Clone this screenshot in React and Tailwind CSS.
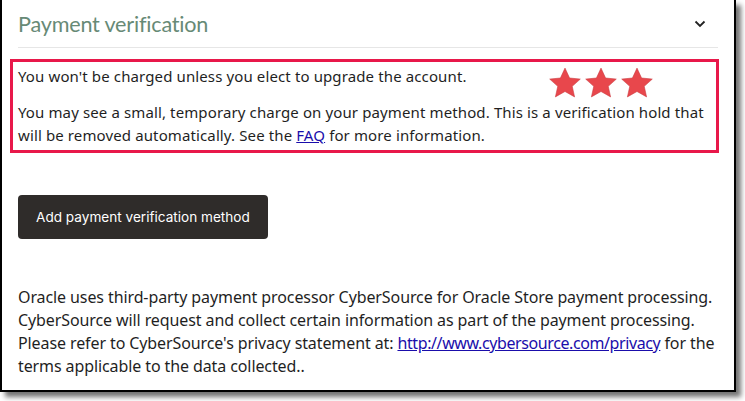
import React from 'react';

const Star = () => (
    <svg width="34" height="32" viewBox="0 0 24 23" className="block">
        <path
            d="M12 0.8l3.3 7.1 7.7 0.8-5.8 5.2 1.7 7.6L12 17.6l-6.9 3.9 1.7-7.6L1 8.7l7.7-0.8z"
            fill="#e8474c"
            stroke="#c93a40"
            strokeWidth="0.4"
            strokeLinejoin="round"
        />
    </svg>
);

const App = () => {
    return (
        <div className="w-[745px] h-[401px] bg-white overflow-hidden" style={{ fontFamily: '"Noto Sans", "Open Sans", sans-serif' }}>
            <div className="w-[736px] h-[392px] bg-white border-l-2 border-r-2 border-b-2 border-black shadow-[5px_5px_5px_rgba(0,0,0,0.55)] pl-4 pr-4">
                {/* header */}
                <div className="flex items-center justify-between h-[48px] border-b border-[#e6e6e6]">
                    <h2 className="text-[21.6px] text-[#678a76] tracking-[-0.2px] pt-0.5" style={{ fontFamily: 'Lato, sans-serif' }}>
                        Payment verification
                    </h2>
                    <svg width="12" height="8" viewBox="0 0 12 8" className="mr-3">
                        <path d="M1.5 1.5L6 6l4.5-4.5" fill="none" stroke="#222" strokeWidth="1.8" />
                    </svg>
                </div>

                {/* highlighted notice */}
                <div className="relative -ml-[8px] mt-[11px] w-[709px] h-[94px] border-[3px] border-[#e8184a] pl-[5px] pt-[3px] text-[15px] text-[#1f1f1f] leading-[23px] tracking-[0.12px]">
                    <p>You won't be charged unless you elect to upgrade the account.</p>
                    <p className="mt-[13px]">
                        You may see a small, temporary charge on your payment method. This is a verification hold that will be removed automatically. See the{' '}
                        <a href="#" className="text-[#1a0dab] underline">FAQ</a> for more information.
                    </p>
                    <div className="absolute left-[535px] top-[5px] flex gap-[2px]">
                        <Star />
                        <Star />
                        <Star />
                    </div>
                </div>

                {/* action */}
                <button className="mt-[42px] h-[44px] w-[250px] rounded bg-[#2f2c2a] text-white text-[13.6px] text-left pl-[18px]" style={{ fontFamily: 'Inter, sans-serif' }}>
                    Add payment verification method
                </button>

                {/* processor note */}
                <p className="mt-[47px] text-[16px] leading-[23px] text-[#1f1f1f] whitespace-nowrap tracking-[-0.1px]">
                    Oracle uses third-party payment processor CyberSource for Oracle Store payment processing.<br />
                    CyberSource will request and collect certain information as part of the payment processing.<br />
                    Please refer to CyberSource's privacy statement at:{' '}
                    <a href="#" className="text-[#1a0dab] underline tracking-[-0.4px]">http://www.cybersource.com/privacy</a> for the<br />
                    terms applicable to the data collected..
                </p>
            </div>
        </div>
    );
};

export default App;
